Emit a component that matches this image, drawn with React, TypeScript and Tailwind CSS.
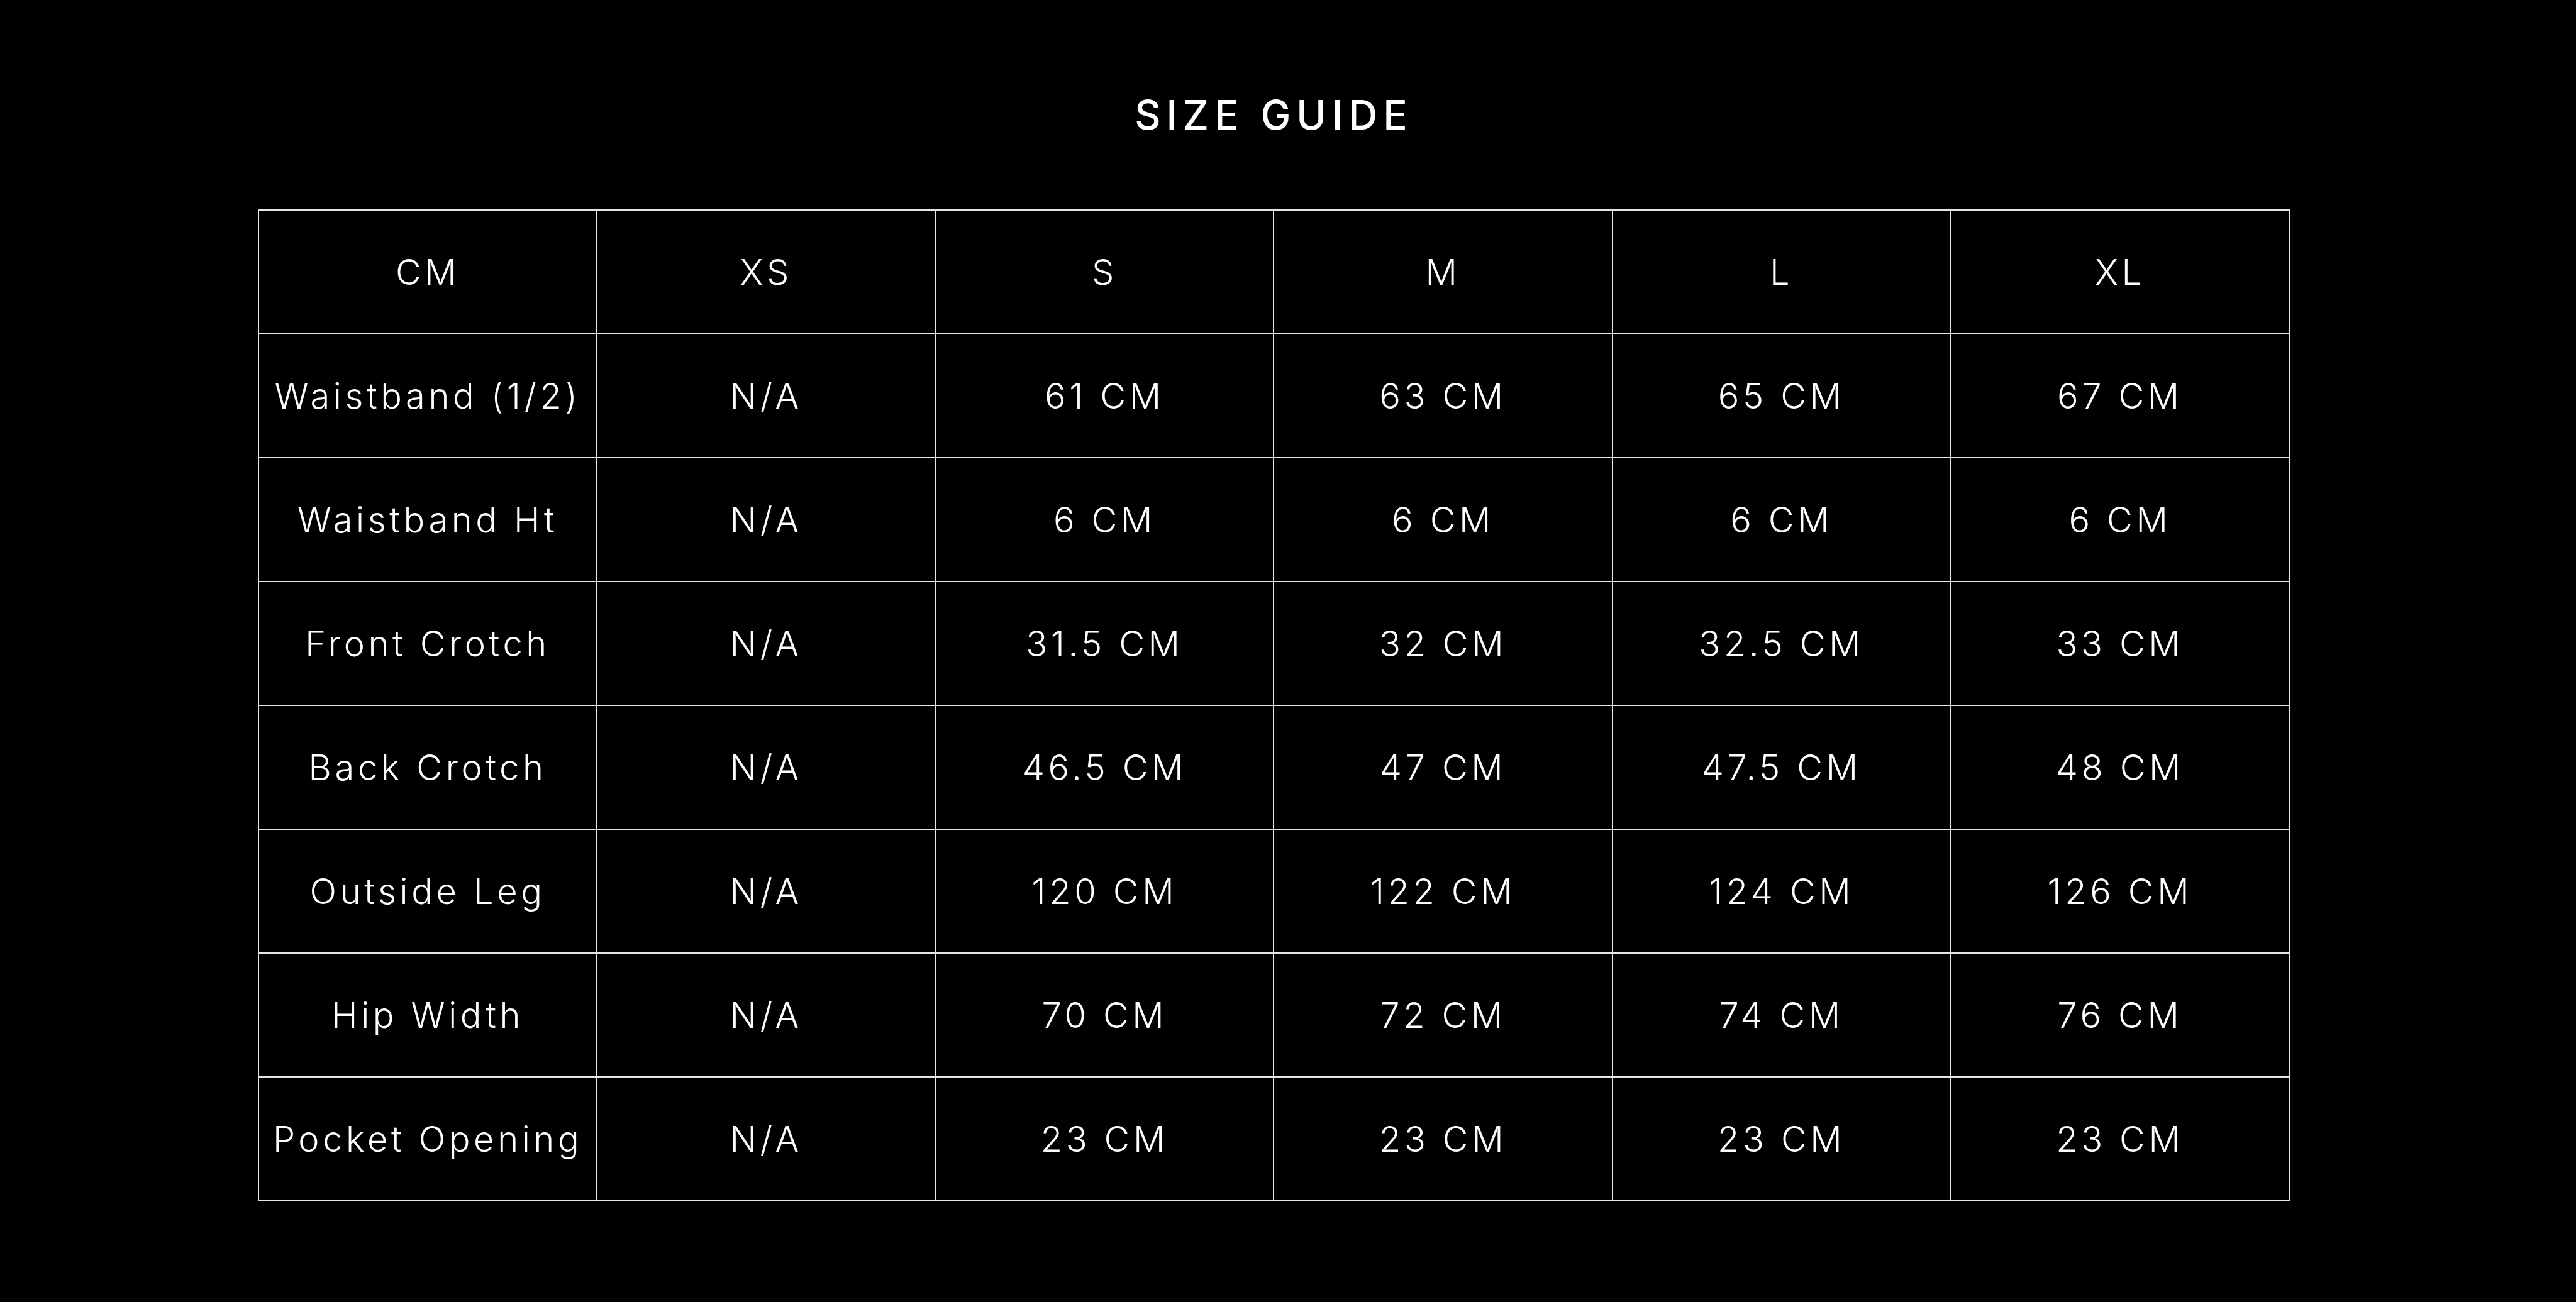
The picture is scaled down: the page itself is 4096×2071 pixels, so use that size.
const sizes = ["XS", "S", "M", "L", "XL"];

const rows = [
  { label: "Waistband (1/2)", values: ["N/A", "61 CM", "63 CM", "65 CM", "67 CM"] },
  { label: "Waistband Ht", values: ["N/A", "6 CM", "6 CM", "6 CM", "6 CM"] },
  { label: "Front Crotch", values: ["N/A", "31.5 CM", "32 CM", "32.5 CM", "33 CM"] },
  { label: "Back Crotch", values: ["N/A", "46.5 CM", "47 CM", "47.5 CM", "48 CM"] },
  { label: "Outside Leg", values: ["N/A", "120 CM", "122 CM", "124 CM", "126 CM"] },
  { label: "Hip Width", values: ["N/A", "70 CM", "72 CM", "74 CM", "76 CM"] },
  { label: "Pocket Opening", values: ["N/A", "23 CM", "23 CM", "23 CM", "23 CM"] },
];

const cell =
  "h-[197px] border-2 border-[#e6e6e6] text-center align-middle p-0 whitespace-nowrap";

export default function App() {
  return (
    <div className="min-h-screen w-full bg-black text-white font-['Inter','Liberation_Sans',sans-serif]">
      <div className="w-[3231px] ml-[410px] pt-[151px]">
        {/* title */}
        <h1 className="text-center text-[64px] leading-[64px] font-medium tracking-[0.14em] mb-[118px]">
          SIZE GUIDE
        </h1>

        {/* size table */}
        <table className="w-full table-fixed border-collapse text-[56px] font-light tracking-[0.1em]">
          <thead>
            <tr>
              <th className={`${cell} font-light`}>CM</th>
              {sizes.map((s) => (
                <th key={s} className={`${cell} font-light`}>
                  {s}
                </th>
              ))}
            </tr>
          </thead>
          <tbody>
            {rows.map((row) => (
              <tr key={row.label}>
                <td className={cell}>{row.label}</td>
                {row.values.map((v, i) => (
                  <td key={i} className={cell}>
                    {v}
                  </td>
                ))}
              </tr>
            ))}
          </tbody>
        </table>
      </div>
    </div>
  );
}
